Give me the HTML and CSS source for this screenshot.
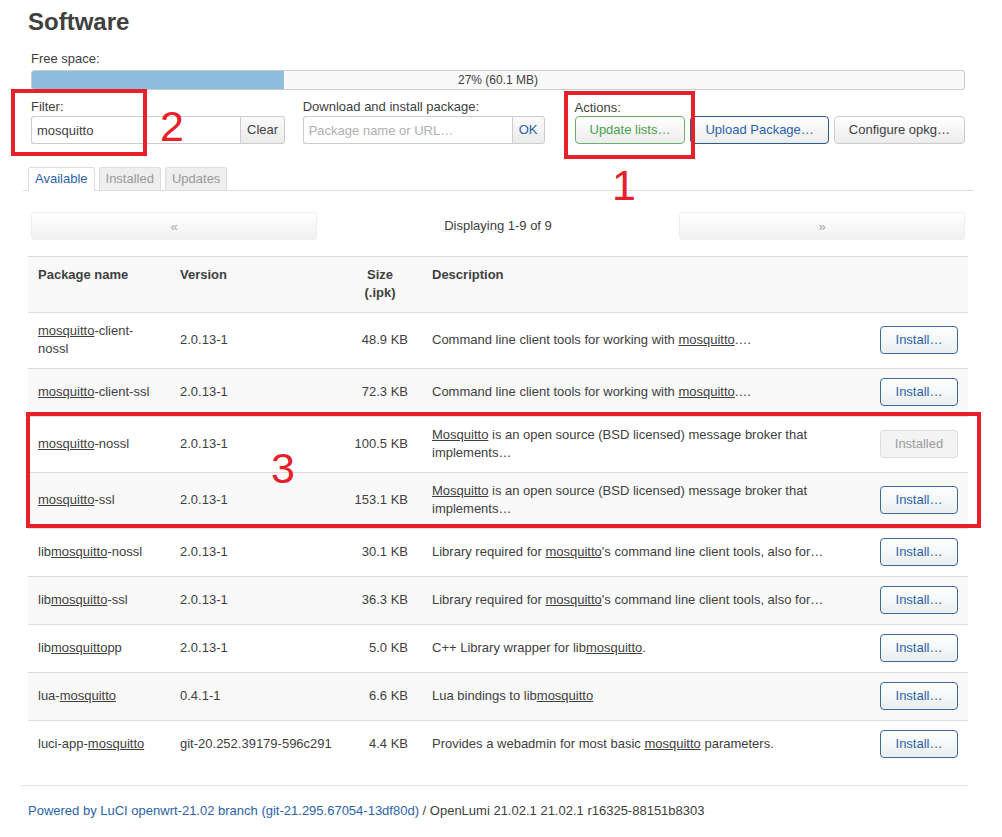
FILE: index.html
```html
<!DOCTYPE html>
<html lang="en">
<head>
<meta charset="utf-8">
<title>Software</title>
<link rel="stylesheet" href="styles.css">
</head>
<body>
<div class="page">
  <h2 class="title">Software</h2>

  <div class="space">
    <div class="lbl">Free space:</div>
    <div class="bar">
      <div class="bar-fill" style="width:27%"></div>
      <div class="bar-text">27% (60.1 MB)</div>
    </div>
  </div>

  <div class="controls">
    <div class="group g-filter">
      <div class="lbl">Filter:</div>
      <div class="igroup">
        <input class="inp" type="text" value="mosquitto">
        <button class="btn addon">Clear</button>
      </div>
    </div>
    <div class="group g-download">
      <div class="lbl">Download and install package:</div>
      <div class="igroup">
        <input class="inp" type="text" placeholder="Package name or URL…">
        <button class="btn addon addon-ok">OK</button>
      </div>
    </div>
    <div class="group g-actions">
      <div class="lbl lbl-actions">Actions:</div>
      <div class="btnrow">
        <button class="btn btn-positive">Update lists…</button>
        <button class="btn btn-action">Upload Package…</button>
        <button class="btn btn-neutral">Configure opkg…</button>
      </div>
    </div>
  </div>

  <ul class="tabs">
    <li class="tab active">Available</li>
    <li class="tab">Installed</li>
    <li class="tab">Updates</li>
  </ul>

  <div class="pager">
    <button class="pg-btn">«</button>
    <div class="pg-info">Displaying 1-9 of 9</div>
    <button class="pg-btn">»</button>
  </div>

  <table class="pkgs">
    <colgroup>
      <col class="c-name"><col class="c-ver"><col class="c-size"><col class="c-desc"><col class="c-act">
    </colgroup>
    <thead>
      <tr>
        <th>Package name</th>
        <th>Version</th>
        <th class="size">Size<br>(.ipk)</th>
        <th>Description</th>
        <th></th>
      </tr>
    </thead>
    <tbody>
      <tr>
        <td><u>mosquitto</u>-client-nossl</td>
        <td class="ver">2.0.13-1</td>
        <td class="size">48.9 KB</td>
        <td>Command line client tools for working with <u>mosquitto</u>.…</td>
        <td class="act"><button class="btn btn-install">Install…</button></td>
      </tr>
      <tr>
        <td><u>mosquitto</u>-client-ssl</td>
        <td class="ver">2.0.13-1</td>
        <td class="size">72.3 KB</td>
        <td>Command line client tools for working with <u>mosquitto</u>.…</td>
        <td class="act"><button class="btn btn-install">Install…</button></td>
      </tr>
      <tr>
        <td><u>mosquitto</u>-nossl</td>
        <td class="ver">2.0.13-1</td>
        <td class="size">100.5 KB</td>
        <td><u>Mosquitto</u> is an open source (BSD licensed) message broker that implements…</td>
        <td class="act"><button class="btn btn-installed" disabled>Installed</button></td>
      </tr>
      <tr>
        <td><u>mosquitto</u>-ssl</td>
        <td class="ver">2.0.13-1</td>
        <td class="size">153.1 KB</td>
        <td><u>Mosquitto</u> is an open source (BSD licensed) message broker that implements…</td>
        <td class="act"><button class="btn btn-install">Install…</button></td>
      </tr>
      <tr>
        <td>lib<u>mosquitto</u>-nossl</td>
        <td class="ver">2.0.13-1</td>
        <td class="size">30.1 KB</td>
        <td>Library required for <u>mosquitto</u>'s command line client tools, also for…</td>
        <td class="act"><button class="btn btn-install">Install…</button></td>
      </tr>
      <tr>
        <td>lib<u>mosquitto</u>-ssl</td>
        <td class="ver">2.0.13-1</td>
        <td class="size">36.3 KB</td>
        <td>Library required for <u>mosquitto</u>'s command line client tools, also for…</td>
        <td class="act"><button class="btn btn-install">Install…</button></td>
      </tr>
      <tr>
        <td>lib<u>mosquitto</u>pp</td>
        <td class="ver">2.0.13-1</td>
        <td class="size">5.0 KB</td>
        <td>C++ Library wrapper for lib<u>mosquitto</u>.</td>
        <td class="act"><button class="btn btn-install">Install…</button></td>
      </tr>
      <tr>
        <td>lua-<u>mosquitto</u></td>
        <td class="ver">0.4.1-1</td>
        <td class="size">6.6 KB</td>
        <td>Lua bindings to lib<u>mosquitto</u></td>
        <td class="act"><button class="btn btn-install">Install…</button></td>
      </tr>
      <tr>
        <td>luci-app-<u>mosquitto</u></td>
        <td class="ver">git-20.252.39179-596c291</td>
        <td class="size">4.4 KB</td>
        <td>Provides a webadmin for most basic <u>mosquitto</u> parameters.</td>
        <td class="act"><button class="btn btn-install">Install…</button></td>
      </tr>
    </tbody>
  </table>

  <footer class="footer">
    <a class="flink" href="#">Powered by LuCI openwrt-21.02 branch (git-21.295.67054-13df80d)</a> / OpenLumi 21.02.1 21.02.1 r16325-88151b8303
  </footer>
</div>

<div class="anno-box box2"></div>
<div class="anno-num n2">2</div>
<div class="anno-box box1"></div>
<div class="anno-num n1">1</div>
<div class="anno-box box3"></div>
<div class="anno-num n3">3</div>
</body>
</html>
```

FILE: styles.css
```css
html, body {
  margin: 0;
  padding: 0;
}

body {
  position: relative;
  font-family: "Liberation Sans", Arial, sans-serif;
  font-size: 13px;
  line-height: 18px;
  color: #404040;
  background: #fff;
}

.page {
  padding: 0 34px 20px 28px;
}

.title {
  margin: 0;
  padding-top: 8px;
  font-size: 24px;
  line-height: 28px;
  font-weight: bold;
  color: #404040;
}

.space {
  padding: 13px 3px 0;
}

.lbl {
  line-height: 18px;
}

.space .lbl {
  padding-top: 1px;
  margin-bottom: -1px;
}

.bar {
  position: relative;
  margin-top: 3px;
  height: 20px;
  box-sizing: border-box;
  border: 1px solid #ccc;
  border-radius: 3px;
  background: #f9f9f9;
  overflow: hidden;
}

.bar-fill {
  height: 100%;
  background: #8fbddd;
}

.bar-text {
  position: absolute;
  left: 0;
  right: 0;
  top: 0;
  text-align: center;
  font-size: 12px;
  line-height: 18px;
  color: #404040;
}

.controls {
  display: flex;
  padding: 7px 3px 0;
}

.controls .lbl {
  padding-top: 1px;
  margin-bottom: -1px;
}

.g-filter {
  width: 256px;
  margin-right: 17px;
}

.g-download {
  width: 242px;
  margin-right: 30px;
}

.controls .lbl-actions {
  padding-top: 2px;
  margin-bottom: -2px;
}

.igroup {
  display: flex;
  margin-top: 1px;
}

.inp {
  width: 209px;
  height: 28px;
  box-sizing: border-box;
  border: 1px solid #ccc;
  border-right: none;
  border-radius: 3px 0 0 3px;
  padding: 0 5px;
  font-family: inherit;
  font-size: 13px;
  color: #404040;
  background: #fff;
  outline: none;
}

.inp::placeholder {
  color: #b0b0b0;
}

.btn {
  height: 28px;
  box-sizing: border-box;
  padding: 0 14px;
  border: 1px solid #ccc;
  border-radius: 4px;
  background: linear-gradient(#ffffff, #ececec);
  font-family: inherit;
  font-size: 13px;
  line-height: 26px;
  color: #404040;
  cursor: pointer;
  white-space: nowrap;
}

.addon {
  padding: 0 6px;
  border-radius: 0 3px 3px 0;
  background: linear-gradient(#fafafa, #ebebeb);
}

.addon-ok {
  color: #2d63a8;
}

.btnrow {
  display: flex;
  gap: 5px;
  margin-top: 1px;
}

.btn-positive {
  color: #4c9f4c;
  border-color: #6db06d;
}

.btn-action {
  color: #2d63a8;
  border-color: #2b5a88;
}

.tabs {
  list-style: none;
  display: flex;
  align-items: flex-end;
  gap: 4px;
  margin: 23px -5px 0;
  padding: 0 0 0 5px;
  border-bottom: 1px solid #ddd;
}

.tab {
  padding: 0 6px;
  line-height: 22px;
  border: 1px solid #ddd;
  border-bottom: none;
  border-radius: 3px 3px 0 0;
  background: #eeeeee;
  color: #9a9a9a;
}

.tab.active {
  background: #fff;
  color: #2d63a8;
  padding-bottom: 1px;
  margin-bottom: -1px;
}

.pager {
  display: flex;
  align-items: center;
  margin-top: 21px;
  padding: 0 3px;
}

.pg-btn {
  width: 286px;
  height: 28px;
  border: 1px solid #eee;
  border-radius: 3px;
  background: linear-gradient(#ffffff, #f1f1f1);
  font-family: inherit;
  font-size: 13px;
  color: #aaa;
}

.pg-info {
  flex: 1;
  text-align: center;
}

.pkgs {
  width: 100%;
  margin-top: 16px;
  border-collapse: collapse;
  table-layout: fixed;
}

.c-name { width: 142px; }
.c-ver { width: 172px; }
.c-size { width: 80px; }
.c-desc { width: 446px; }
.c-act { width: 100px; }

.pkgs th,
.pkgs td {
  border-top: 1px solid #ddd;
  padding: 9px 10px 10px;
  text-align: left;
  vertical-align: middle;
}

.pkgs thead tr {
  background: #f9f9f9;
}

.pkgs th {
  vertical-align: top;
  font-weight: bold;
}

.pkgs th.size {
  text-align: center;
  padding-right: 14px;
}

.pkgs td.size {
  text-align: right;
  padding-right: 14px;
}

.pkgs td.ver {
  white-space: nowrap;
}

.pkgs td.act {
  padding-left: 12px;
}

.pkgs tbody tr:nth-child(even) {
  background: #f9f9f9;
}

.pkgs u {
  text-decoration: underline;
  text-underline-offset: 1px;
}

.btn-install {
  display: block;
  width: 78px;
  padding: 0;
  color: #2d63a8;
  border-color: #3a6c9c;
  background: linear-gradient(#ffffff, #eaeef2);
}

.btn-installed {
  display: block;
  width: 78px;
  padding: 0;
  color: #9a9a9a;
  border-color: #dcdcdc;
  background: #f3f3f3;
  cursor: default;
}

.footer {
  margin: 17px 0 0 -8px;
  padding: 16px 0 0 8px;
  border-top: 1px solid #e8e8e8;
  font-size: 13px;
  line-height: 18px;
  color: #404040;
}

.flink {
  color: #2d63a8;
  text-decoration: none;
}

.anno-box {
  position: absolute;
  box-sizing: border-box;
  border: 4px solid #e8202a;
}

.box2 { left: 11px; top: 89px; width: 136px; height: 67px; }
.box1 { left: 564px; top: 91px; width: 131px; height: 68px; }
.box3 { left: 26px; top: 412px; width: 955px; height: 116px; }

.anno-num {
  position: absolute;
  font-family: "Liberation Sans", Arial, sans-serif;
  font-size: 43px;
  line-height: 43px;
  color: #e8202a;
}

.n2 { left: 160px; top: 105px; }
.n1 { left: 612px; top: 164px; }
.n3 { left: 271px; top: 447px; }
```
